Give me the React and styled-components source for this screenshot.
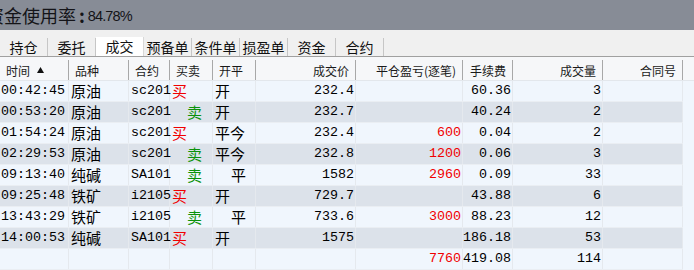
import React from 'react';
import styled, { createGlobalStyle } from 'styled-components';

const GlobalStyle = createGlobalStyle`
  html, body { margin: 0; padding: 0; }
  body { background: #f0f6fd; overflow: hidden; width: 694px; height: 270px; }
`;

const COLS = '69px 60px 41px 43px 43px 100px 107px 50px 90px 80px';
const CJK = `"Noto Sans CJK SC", "Microsoft YaHei", sans-serif`;
const MONO = `"Liberation Mono", "Noto Sans CJK SC", monospace`;

const Page = styled.div`
  width: 694px;
  height: 270px;
  overflow: hidden;
  display: flex;
  flex-direction: column;
  background: #f0f6fd;
`;

const TopBar = styled.div`
  height: 30px;
  flex: none;
  background: #878c96;
  display: flex;
  align-items: center;
  overflow: hidden;
  color: #141418;
`;

const TopLabel = styled.div`
  margin-left: -14px;
  display: flex;
  align-items: center;
  height: 30px;
  font-family: ${CJK};
  font-size: 18px;
  white-space: nowrap;
`;

const Colon = styled.span`
  font-weight: 700;
  margin: 0 3px 0 3px;
`;

const TopValue = styled.span`
  font-family: "Liberation Sans", Arial, sans-serif;
  font-size: 14.5px;
  letter-spacing: -0.9px;
  margin-top: 1px;
`;

const TabBar = styled.div`
  height: 27px;
  flex: none;
  box-sizing: border-box;
  background: #f0f0f0;
  border-bottom: 1px solid #a0a0a0;
  display: flex;
  align-items: flex-end;
`;

const Tab = styled.div`
  width: 48px;
  height: ${p => (p.$active ? '19px' : '18px')};
  box-sizing: border-box;
  background: ${p => (p.$active ? '#ffffff' : 'transparent')};
  border-right: 1px solid ${p => (p.$active ? '#d8d8d8' : '#c6c6c6')};
  font-family: ${CJK};
  font-size: 14px;
  line-height: ${p => (p.$active ? '19px' : '18px')};
  text-align: center;
  color: #111;
  white-space: nowrap;
`;

const Header = styled.div`
  height: 24px;
  flex: none;
  box-sizing: border-box;
  padding-top: 3px;
  display: grid;
  grid-template-columns: ${COLS} 1fr;
  background: #f6f7f9;
  border-bottom: 1px solid #e3e7ec;
`;

const HeaderCell = styled.div`
  border-right: 1px solid #a8a8a8;
  padding: 0 6px;
  font-family: ${CJK};
  font-size: 12px;
  line-height: 19px;
  color: #1a1a1a;
  white-space: nowrap;
  display: flex;
  align-items: center;
  justify-content: ${p => (p.$align === 'right' ? 'flex-end' : 'flex-start')};
  gap: 7px;
`;

const HeaderFill = styled.div``;

const SortArrow = styled.svg`
  width: 7px;
  height: 6px;
  flex: none;
`;

const Body = styled.div`
  flex: 1;
  display: flex;
  flex-direction: column;
`;

const Row = styled.div`
  width: 683px;
  height: 21px;
  flex: none;
  box-sizing: border-box;
  display: grid;
  grid-template-columns: ${COLS};
  background: ${p => (p.$alt ? '#dce2ea' : '#f0f6fd')};
  border-bottom: 1px solid #eaeef3;
`;

const Cell = styled.div`
  border-right: 1px solid #e5e9ee;
  padding: 0 ${p => (p.$align === 'right' ? '1px' : '0')} 0 ${p => p.$indent || 0}px;
  font-family: ${p => (p.$cjk ? CJK : MONO)};
  font-size: ${p => (p.$cjk ? '15px' : '13.33px')};
  line-height: 20px;
  color: ${p => p.$color || '#000'};
  text-align: ${p => p.$align || 'left'};
  white-space: nowrap;
  overflow: visible;
  min-width: 0;
`;

const headers = [
  ['时间', 'left'],
  ['品种', 'left'],
  ['合约', 'left'],
  ['买卖', 'left'],
  ['开平', 'left'],
  ['成交价', 'right'],
  ['平仓盈亏(逐笔)', 'right'],
  ['手续费', 'right'],
  ['成交量', 'right'],
  ['合同号', 'right'],
];

const tabs = ['持仓', '委托', '成交', '预备单', '条件单', '损盈单', '资金', '合约'];

const rows = [
  ['00:42:45', '原油', 'sc201', '买', '开', '232.4', '', '60.36', '3'],
  ['00:53:20', '原油', 'sc201', '卖', '开', '232.7', '', '40.24', '2'],
  ['01:54:24', '原油', 'sc201', '买', '平今', '232.4', '600', '0.04', '2'],
  ['02:29:53', '原油', 'sc201', '卖', '平今', '232.8', '1200', '0.06', '3'],
  ['09:13:40', '纯碱', 'SA101', '卖', '平', '1582', '2960', '0.09', '33'],
  ['09:25:48', '铁矿', 'i2105', '买', '开', '729.7', '', '43.88', '6'],
  ['13:43:29', '铁矿', 'i2105', '卖', '平', '733.6', '3000', '88.23', '12'],
  ['14:00:53', '纯碱', 'SA101', '买', '开', '1575', '', '186.18', '53'],
  ['', '', '', '', '', '', '7760', '419.08', '114'],
];

function DataRow({ r, alt }) {
  const [time, kind, contract, side, oc, price, pnl, fee, qty] = r;
  return (
    <Row $alt={alt}>
      <Cell $indent={1}>{time}</Cell>
      <Cell $cjk $indent={2}>{kind}</Cell>
      <Cell $indent={2}>{contract}</Cell>
      <Cell
        $cjk
        $indent={side === '卖' ? 17 : 2}
        $color={side === '买' ? '#f00000' : '#0a920a'}
      >
        {side}
      </Cell>
      <Cell $cjk $indent={oc === '平' ? 18 : 2}>{oc}</Cell>
      <Cell $align="right">{price}</Cell>
      <Cell $align="right" $color="#f00000">{pnl}</Cell>
      <Cell $align="right">{fee}</Cell>
      <Cell $align="right">{qty}</Cell>
      <Cell />
    </Row>
  );
}

export default function App() {
  return (
    <Page>
      <GlobalStyle />
      <TopBar>
        <TopLabel>
          资金使用率<Colon>:</Colon>
          <TopValue>84.78%</TopValue>
        </TopLabel>
      </TopBar>
      <TabBar>
        {tabs.map(t => (
          <Tab key={t} $active={t === '成交'}>{t}</Tab>
        ))}
      </TabBar>
      <Header>
        {headers.map(([h, a], i) => (
          <HeaderCell key={h} $align={a}>
            {h}
            {i === 0 && (
              <SortArrow viewBox="0 0 7 6">
                <path d="M3.5 0 L7 6 L0 6 Z" fill="#111" />
              </SortArrow>
            )}
          </HeaderCell>
        ))}
        <HeaderFill />
      </Header>
      <Body>
        {rows.map((r, i) => (
          <DataRow key={i} r={r} alt={i % 2 === 1} />
        ))}
      </Body>
    </Page>
  );
}
